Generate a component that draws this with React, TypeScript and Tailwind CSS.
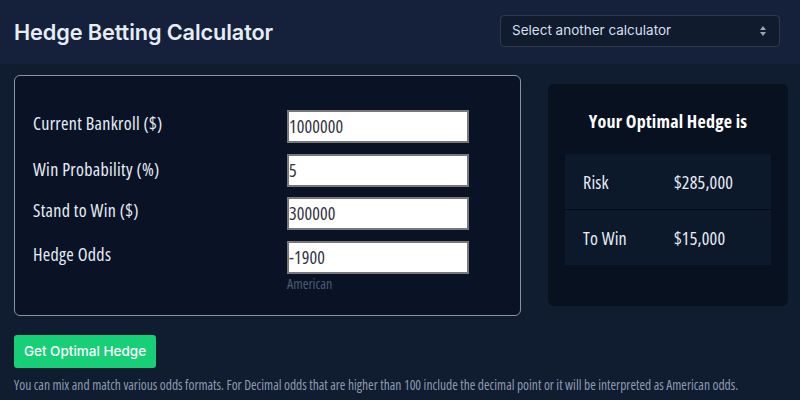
import React from "react";

const fields = [
  { label: "Current Bankroll ($)", value: "1000000", pad: "pt-[1px]" },
  { label: "Win Probability (%)", value: "5", pad: "pt-[3px]" },
  { label: "Stand to Win ($)", value: "300000", pad: "pt-[1px]" },
  { label: "Hedge Odds", value: "-1900", pad: "pt-[1px]" },
];

function Row({ label, value }: { label: string; value: string }) {
  return (
    <div className="h-[55px] bg-[#0c192b] flex items-center pl-[18px] text-[18px] leading-[24px] text-[#e8edf5] tracking-[0.2px]">
      <span className="w-[91px]">{label}</span>
      <span>{value}</span>
    </div>
  );
}

export default function App() {
  return (
    <div className="w-[800px] h-[400px] overflow-hidden bg-[#101c30] font-['Open_Sans',sans-serif] [font-stretch:75%]">
      <header className="h-[64px] bg-[#15213a] flex items-center justify-between pl-[14px] pr-[20px]">
        <h1 className="text-[21.7px] font-semibold text-[#e6edf7] tracking-[-0.1px] font-['Inter',sans-serif] [font-stretch:100%]">
          Hedge Betting Calculator
        </h1>
        <div className="w-[280px] h-[32px] mt-[-3px] rounded-[4px] border border-[#2e3a50] bg-[#111b2e] flex items-center justify-between pl-[11px] pr-[12px]">
          <span className="text-[13.5px] text-[#d6dfee] font-['Inter',sans-serif] [font-stretch:100%]">Select another calculator</span>
          <svg width="8" height="12" viewBox="0 0 8 12">
            <path d="M4 1 L7 5 H1 Z" fill="#9aa4b5" />
            <path d="M4 11 L7 7 H1 Z" fill="#9aa4b5" />
          </svg>
        </div>
      </header>
      <div className="flex pl-[14px]">
        <div className="mt-[11px] w-[507px] h-[241px] rounded-[6px] border border-[#8a93a3] bg-[#091325] pl-[18px] pt-[34px]">
          <div className="flex flex-col gap-[10.5px]">
            {fields.map((f, i) => (
              <div key={f.label} className="flex items-start">
                <div className={`w-[254px] text-[18px] leading-[24px] text-[#e8edf5] tracking-[0.3px] ${f.pad}`}>{f.label}</div>
                <div className="flex flex-col">
                  <div className="w-[182px] h-[33px] bg-white border-2 border-[#76787c] flex items-center text-[18px] text-[#333340] tracking-[0.1px]">
                    {f.value}
                  </div>
                  {i === 3 && <div className="text-[14px] leading-[18px] text-[#4c5a73] mt-[1px]">American</div>}
                </div>
              </div>
            ))}
          </div>
        </div>
        <div className="mt-[20px] ml-[27px] w-[240px] h-[222px] rounded-[6px] bg-[#08111f] px-[17px] pt-[25px]">
          <div className="text-center text-[18px] leading-[24px] font-bold text-white tracking-[0.25px]">Your Optimal Hedge is</div>
          <div className="mt-[21px] bg-[#050c16] flex flex-col gap-[1px]">
            <Row label="Risk" value="$285,000" />
            <Row label="To Win" value="$15,000" />
          </div>
        </div>
      </div>
      <div className="pl-[14px] mt-[19px]">
        <button className="h-[33px] w-[142px] rounded-[3px] bg-[#17cf76] text-white text-[13.5px] font-medium font-['Inter',sans-serif] [font-stretch:100%]">
          Get Optimal Hedge
        </button>
        <p className="mt-[8px] text-[13.5px] leading-[18px] text-[#8d9ab0] whitespace-nowrap">
          You can mix and match various odds formats. For Decimal odds that are higher than 100 include the decimal point or it will be interpreted as American odds.
        </p>
      </div>
    </div>
  );
}
